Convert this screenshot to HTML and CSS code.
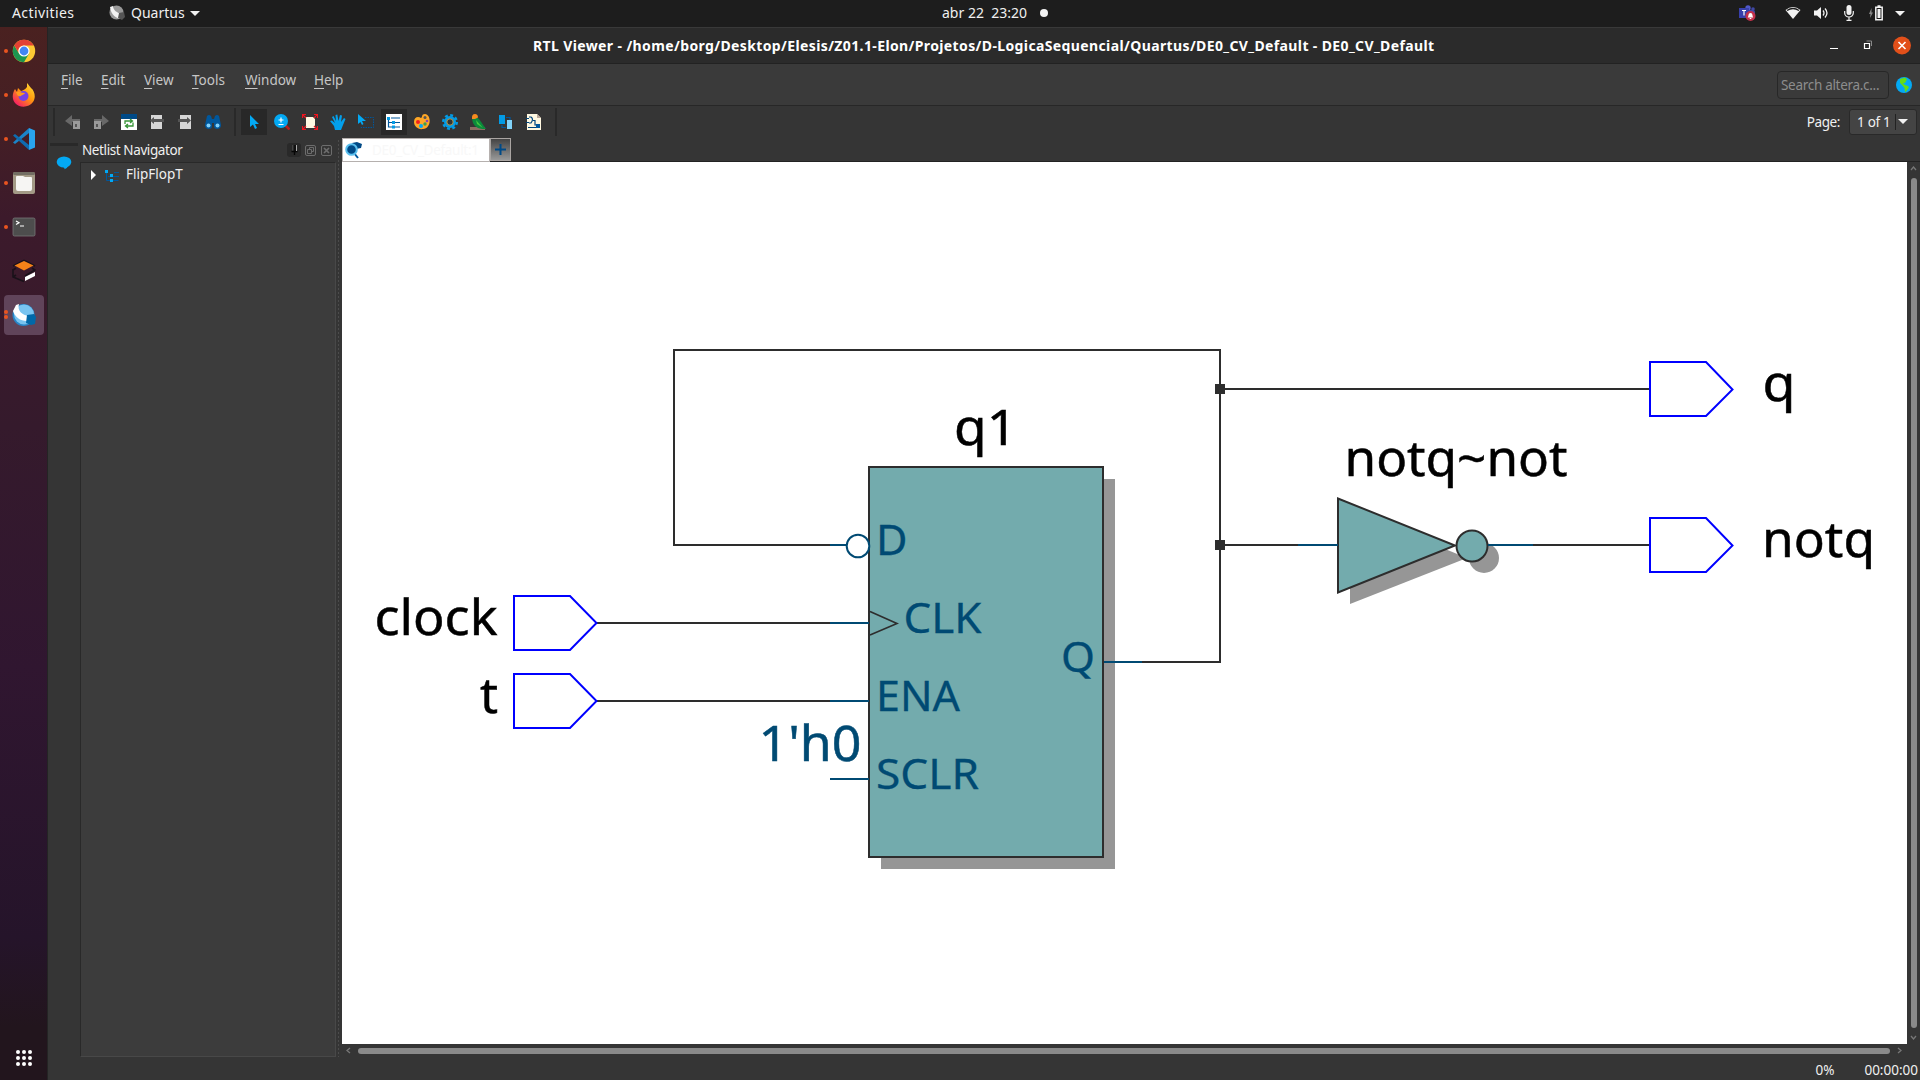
FILE: index.html
```html
<!DOCTYPE html>
<html lang="en">
<head>
<meta charset="utf-8">
<title>RTL Viewer</title>
<link rel="stylesheet" href="styles.css">
</head>
<body>
<header class="topbar">
  <span class="activities">Activities</span>
  <span class="appmenu">
    <svg width="17" height="17" viewBox="0 0 17 17"><circle cx="7.500" cy="7.500" r="7" fill="#999"/><path d="M1 2C2 10 7 14 14 14L13 9C8 8 4 5 4 1Z" fill="#f2f2f2"/><path d="M10 8l5-1 1 5-3 3-4-2z" fill="#555"/></svg>
    <span>Quartus</span><i class="caret"></i>
  </span>
  <span class="clock">abr 22&nbsp; 23:20<i class="notice"></i></span>
  <span class="tray">
    <svg width="18" height="16" viewBox="0 0 18 16"><circle cx="9" cy="3" r="2.700" fill="#5059c9"/><circle cx="14" cy="4" r="1.800" fill="#4048a5"/><rect y="5" x="7" width="9" height="7" rx="2" fill="#4048a5"/><rect y="3" width="10" height="10" fill="#3940ab"/><path d="M3 5.500h4M5 5.500v5" stroke="#fff" stroke-width="1.200"/><circle cx="11.500" cy="11" r="5" fill="#c4314b"/><path d="M8.700 12.500c1-1 .3-4.500 2.800-4.500s1.800 3.500 2.800 4.500zM10.700 13h1.600v1h-1.600z" fill="#fff"/></svg>
    <svg class="wifi" width="16" height="14" viewBox="0 0 16 14"><path d="M.5 4Q8-2 15.500 4L8 13z" fill="#f2f2f2"/><path d="M2 4.500Q8 .500 14 4.500" fill="none" stroke="#1d1d1d" stroke-width="1.300"/></svg>
    <svg class="vol" width="15" height="14" viewBox="0 0 15 14"><path d="M0 4.500h3L7 1v12L3 9.500H0z" fill="#f2f2f2"/><path d="M9 4.500q2 2.500 0 5M11 2.500q4 4.500 0 9" fill="none" stroke="#f2f2f2" stroke-width="1.300"/></svg>
    <svg class="mic" width="10" height="16" viewBox="0 0 10 16"><rect x="2.500" width="5" height="10" rx="2.500" fill="#f2f2f2"/><path d="M.7 6v2a4.300 4 0 0 0 8.600 0V6M5 12v3M2.500 15.300h5" fill="none" stroke="#f2f2f2" stroke-width="1.200"/></svg>
    <svg class="bat" width="15" height="16" viewBox="0 0 15 16"><path d="M2.500 3L0 9h1.500l-.5 4L4 7.500H2.500z" fill="#888"/><path d="M6.800 2.200h6.400v12.500H6.800zM8.500 1h3" fill="none" stroke="#f2f2f2" stroke-width="1.500"/><path d="M8.500 4h3v9h-3z" fill="#f2f2f2"/></svg>
    <i class="caret"></i>
  </span>
</header>
<div class="desktop">
  <nav class="dock">
    <div class="launcher run"><svg width="24" height="24" viewBox="0 0 24 24"><circle cx="12" cy="12" r="11.200" fill="#fcc934"/><path d="M2.300 6.400A11.200 11.200 0 0 0 12 23.200L16.900 14.800 12 12 7.200 14.800z" fill="#1c9650"/><path d="M2.300 6.400A11.200 11.200 0 0 1 21.700 6.400H12A5.600 5.600 0 0 0 6.500 13.500z" fill="#e34133"/><circle cx="12" cy="12" r="5.600" fill="#fff"/><circle cx="12" cy="12" r="4.400" fill="#4285f4"/></svg></div>
    <div class="launcher run"><svg width="24" height="24" viewBox="0 0 24 24"><defs><linearGradient id="ff" x1="1" y1="0" x2=".2" y2="1"><stop offset="0" stop-color="#ffe83c"/><stop offset=".5" stop-color="#ff980e"/><stop offset="1" stop-color="#f5156c"/></linearGradient></defs><path d="M15 0c2 2 3 4 4 5 4 3 5 10 2 14-4 6-14 6-18 1-3-4-3-9 0-14l2 3 1-4 3 3c2-1 4-1 6-4z" fill="url(#ff)"/><circle cx="11.500" cy="13" r="5" fill="#7542e5"/><path d="M4 9c4-1 5 1 9 1-1 2-4 2-4 3-3 1-4-1-5-4z" fill="#ff9a1f"/></svg></div>
    <div class="launcher run"><svg width="24" height="24" viewBox="0 0 24 24"><path d="M17 1v5L3 17 1 15.500z" fill="#1b84c9"/><path d="M1 8.500L3 7l14 11v5z" fill="#0f6cb0"/><path d="M17 1l6 2.500v17L17 23z" fill="#29a3ee"/></svg></div>
    <div class="launcher run"><svg width="24" height="24" viewBox="0 0 24 24"><rect x="1" y="1" width="22" height="22" rx="2" fill="#a39a86"/><rect x="1" y="1" width="22" height="3" rx="1.500" fill="#736e63"/><path d="M5 5h6l2 1h6q1 0 1 1v11q0 2-2 2H6q-2 0-2-2V6q0-1 1-1z" fill="#f6f5f3"/></svg></div>
    <div class="launcher run"><svg width="24" height="24" viewBox="0 0 24 24"><rect x="1" y="3" width="22" height="18" rx="1.500" fill="#4d4d4d" stroke="#777" stroke-width=".8"/><path d="M4 6l3 1.700L4 9.400M8 11h4" fill="none" stroke="#fff" stroke-width="1.200"/></svg></div>
    <div class="launcher"><svg width="24" height="24" viewBox="0 0 24 24"><path d="M1 7L12 1.500 23 7M1 10v8l11 4.500M1 11l3-2M20 9l3 2-10 6M1 18l3-2" fill="none" stroke="#191119" stroke-width="1.600"/><path d="M2.500 6.500L12 2l9.500 4.500L12 11.500z" fill="#f68218"/><path d="M13 18l10-5v4l-10 5z" fill="#fff"/></svg></div>
    <div class="launcher run two active"><svg width="24" height="24" viewBox="0 0 24 24"><circle cx="11.500" cy="12" r="11" fill="#2786c8"/><circle cx="12" cy="11.500" r="10" fill="#79c4f0"/><path d="M1 8L4 2l3-1C5 8 10 12 17 13l-2 5C8 18 3 14 1 8z" fill="#fff"/><path d="M15 12l7-1 2 3-1 7-4 1-5-2z" fill="#0068a8"/></svg></div>
    <svg class="showapps" width="18" height="18" viewBox="0 0 18 18" fill="#fff"><circle cx="3" cy="3" r="2"/><circle cx="9" cy="3" r="2"/><circle cx="15" cy="3" r="2"/><circle cx="3" cy="9" r="2"/><circle cx="9" cy="9" r="2"/><circle cx="15" cy="9" r="2"/><circle cx="3" cy="15" r="2"/><circle cx="9" cy="15" r="2"/><circle cx="15" cy="15" r="2"/></svg>
  </nav>
  <main class="window">
    <div class="titlebar">
      <span class="title">RTL Viewer - /home/borg/Desktop/Elesis/Z01.1-Elon/Projetos/D-LogicaSequencial/Quartus/DE0_CV_Default - DE0_CV_Default</span>
      <svg class="controls" width="84" height="20" viewBox="0 0 84 20"><path d="M3 12.500h8" stroke="#fff"/><path d="M37.500 7.500h5v5h-5z" fill="none" stroke="#fff" stroke-width="1.200"/><path d="M39.500 5h5v5" fill="none" stroke="#888"/><circle cx="75" cy="9.500" r="9" fill="#e2501a"/><path d="M71.500 6l7 7M78.500 6l-7 7" stroke="#fff" stroke-width="1.600"/></svg>
    </div>
    <div class="menubar">
      <span class="m-file"><u>F</u>ile</span><span class="m-edit"><u>E</u>dit</span><span class="m-view"><u>V</u>iew</span><span class="m-tools"><u>T</u>ools</span><span class="m-window"><u>W</u>indow</span><span class="m-help"><u>H</u>elp</span>
      <div class="search">Search altera.c...</div>
      <svg class="globe" width="16" height="16" viewBox="0 0 16 16"><circle cx="8" cy="8" r="8" fill="#03a9f4"/><path d="M4 2l5-1.500 2 2-2 3.500-2 0 2 2 3 1 1 1.500-3 4-1 .5-.5-4-3-3.500L4 6z" fill="#64dd17"/></svg>
    </div>
    <div class="toolbar">
      <i class="sep"></i>
      <div class="tools first">
        <span><svg width="16" height="16" viewBox="0 0 16 16"><path d="M0 7l7-6v4h8v3H7v4z" fill="#686868"/><path d="M8 7h7v8H8z" fill="#9a9a9a"/><path d="M10 10h2v3h-2z" fill="#555"/></svg></span>
        <span><svg width="16" height="16" viewBox="0 0 16 16"><path d="M16 7L9 1v4H1v3h8v4z" fill="#686868"/><path d="M1 7h7v8H1z" fill="#9a9a9a"/><path d="M3 10h2v3H3z" fill="#555"/></svg></span>
        <span><svg width="16" height="16" viewBox="0 0 16 16"><path d="M0 0h16v16H0z" fill="#fff"/><path d="M0 0h16v5H0z" fill="#004a87"/><path d="M4 10V7h7M9 5l2.500 2L9 9M12 8.500V12H5M7 10l-2.500 2L7 14" fill="none" stroke="#389438" stroke-width="1.300"/></svg></span>
        <span><svg width="16" height="16" viewBox="0 0 16 16"><path d="M2 1h11v14H2z" fill="#d6d6d6"/><path d="M1 6.500L5 3v2h10v3H5v2z" fill="#555"/></svg></span>
        <span><svg width="16" height="16" viewBox="0 0 16 16"><path d="M3 1h11v14H3z" fill="#d6d6d6"/><path d="M14 6.500L10 3v2H1v3h9v2z" fill="#555"/></svg></span>
        <span><svg width="16" height="16" viewBox="0 0 16 16"><path d="M2 2q2-2 4 0l1 3h2l1-3q2-2 4 0l2 9q0 4-4 4-3 0-3-3V9H7v3q0 3-3 3-4 0-4-4z" fill="#00579c"/><circle cx="3.500" cy="11.500" r="2" fill="#80d0fa"/><circle cx="12.500" cy="11.500" r="2" fill="#80d0fa"/></svg></span>
      </div>
      <i class="sep"></i>
      <div class="tools main">
        <span class="on"><svg width="16" height="16" viewBox="0 0 16 16"><path d="M4 1v12l3-2.500L9 15l2-1-2-4h4z" fill="#03a9f4"/></svg></span>
        <span><svg width="16" height="16" viewBox="0 0 16 16"><path d="M10.500 10.500l5 5" stroke="#b71c1c" stroke-width="2.500"/><circle cx="7" cy="7" r="7" fill="#03a9f4"/><path d="M4.500 6h5M7 3.500v5M4.500 10.500h5" stroke="#fff" stroke-width="1.200"/></svg></span>
        <span><svg width="16" height="16" viewBox="0 0 16 16"><path d="M4 3h7l2 2v9H4z" fill="#fff8e1"/><path d="M.5 4V.5H4M12 .5h3.500V4M15.500 12v3.500H12M4 15.500H.5V12M0 0l4 4M16 0l-4 4M16 16l-4-4M0 16l4-4" fill="none" stroke="#f0141e" stroke-width="1.200"/></svg></span>
        <span><svg width="16" height="16" viewBox="0 0 16 16"><path d="M5 16L4 12 0 7l2-.5L5 9 2 3l1.500-1L6 7 5.500 1 7.300.500 8.500 7 10 1l2 .5L11 8l3-4 1.500 1L13 11l-2 5z" fill="#03a0ec"/></svg></span>
        <span><svg width="16" height="16" viewBox="0 0 16 16"><path d="M0 0v10l2.500-2L4 11l1.500-1L4 7h4z" fill="#03a9f4"/><path d="M7 3.500h8.500v10H3V12" fill="none" stroke="#00579c" stroke-dasharray="1.500 1"/></svg></span>
        <span class="on"><svg width="16" height="16" viewBox="0 0 16 16"><path d="M0 0h16v16H0z" fill="#fff"/><path d="M2.500 4v9H7M3 8.500h4M5 4h9M9 8.500h5M9 13h5" fill="none" stroke="#00579c" stroke-width="1.200"/><path d="M1 3h3v3H1zM6 7h3v3H6zM6 11.500h3v3H6z" fill="#039be5"/></svg></span>
        <span><svg width="16" height="16" viewBox="0 0 16 16"><path d="M0 8C0 3 4 2 7 4c2-1 0-4 4-4 7 1 6 15-2 15-5 1-9-3-9-7z" fill="#ffa726"/><circle cx="11" cy="3.500" r="1.500" fill="#555"/><circle cx="4" cy="8" r="2" fill="#f02020"/><circle cx="7" cy="12" r="2" fill="#03a9f4"/><circle cx="11" cy="10" r="1.700" fill="#43a047"/><circle cx="13" cy="7" r="1.300" fill="#8e44ad"/></svg></span>
        <span><svg width="16" height="16" viewBox="0 0 16 16"><circle cx="8" cy="8" r="6" fill="#039be5"/><circle cx="8" cy="8" r="6.800" fill="none" stroke="#039be5" stroke-width="2.400" stroke-dasharray="2.900 2.440"/><circle cx="8" cy="8" r="3.200" fill="#333" stroke="#b89b4a"/></svg></span>
        <span><svg width="16" height="16" viewBox="0 0 16 16"><path d="M0 13h15v3H0z" fill="#8d6e63"/><path d="M2 5l4-2 3 2 7 10h-4Q3 14 2 5z" fill="#0b8a3c"/><path d="M6 6l7 8-6-4z" fill="#43c93e"/><path d="M2 5q-.5-5 3-5Q8 0 8 3.500L5 5z" fill="#f58b1f"/></svg></span>
        <span><svg width="16" height="16" viewBox="0 0 16 16"><path d="M1 1h6v9H1z" fill="#039be5"/><path d="M9 6h5v9H9z" fill="#81d4fa"/><path d="M8 3.500h4V6M4 11v2.500h4" fill="none" stroke="#00579c" stroke-width="1.200"/></svg></span>
        <span><svg width="16" height="16" viewBox="0 0 16 16"><path d="M1 0h10l4 4v12H1z" fill="#fff8e1"/><path d="M11 0v4h4" fill="#bca99b"/><path d="M0 4.500h3M0 8.500h3M3 3h2q3 2 0 6H3M7 6.500h2V11h3M2 13.500h8" fill="none" stroke="#00447c" stroke-width="1.200"/><path d="M10 10h4v4h-4z" fill="#00579c"/></svg></span>
      </div>
      <i class="sep"></i>
      <span class="pagelabel">Page:</span>
      <div class="combo"><span>1 of 1</span><b><i class="caret"></i></b></div>
    </div>
    <div class="body">
      <div class="rail"><i></i><svg width="16" height="14" viewBox="0 0 16 14"><ellipse cx="8" cy="6" rx="7.300" ry="5.500" fill="#03a9f4"/><path d="M6 10h6q-1 3-3.500 3.300Q9 12 6 10z" fill="#03a9f4"/></svg></div>
      <section class="navigator">
        <div class="navhead"><span>Netlist Navigator</span>
          <svg width="46" height="14" viewBox="0 0 46 14"><rect width="14" height="14" rx="3" fill="#292929"/><path d="M5.500 2v6" stroke="#444"/><path d="M8 2v6M4.500 8.500h6M7.500 8v4" stroke="#050505" stroke-width="1.400"/><path d="M9.500 2v6" stroke="#aaa"/><g fill="none" stroke="#6d6d6d"><rect x="18.500" y="2.500" width="10" height="10" rx="1.500"/><path d="M20.500 6.500h4v4h-4zM22.500 6V4.500h4v4H25"/><rect x="34.500" y="2.500" width="10" height="10" rx="1.500"/><path d="M37 5l5 5M42 5l-5 5" stroke-width="1.700"/></g></svg>
        </div>
        <div class="tree"><i class="expander"></i><svg width="15" height="12" viewBox="0 0 15 12"><path d="M1.500 2v8.500h12M3 6.500h11M9 2.500h5" fill="none" stroke="#00579c"/><path d="M0 0h3v3H0zM5 4h3v3H5zM5 9h3v3H5z" fill="#03a9f4"/></svg><span>FlipFlopT</span></div>
      </section>
      <div class="splitter"></div>
      <section class="work">
        <div class="tabs">
          <div class="tab"><svg width="17" height="17" viewBox="0 0 17 17"><path d="M7 1l5-1 5 2-1 4-5 1z" fill="#004a87"/><path d="M9 11l4 5" stroke="#00579c" stroke-width="2"/><circle cx="6.500" cy="7.500" r="5.300" fill="#004a87" stroke="#59bfee" stroke-width="2"/></svg><span>DE0_CV_Default:1</span></div>
          <div class="plus"><svg width="11" height="11" viewBox="0 0 11 11"><path d="M5.500 0v11M0 5.500h11" stroke="#004a87" stroke-width="2"/></svg></div>
        </div>
        <div class="view">
          <svg class="schematic" width="1565" height="882" viewBox="342 162 1565 882">
            <g class="shadow"><path d="M881 479h234v390H881z"/><path d="M1350 510v94l117-46z"/><circle cx="1484" cy="558" r="15"/></g>
            <g class="wire"><path d="M831 545H674V350H1220V662H1142M596 623H831M596 701H831M1220 389H1650M1220 545H1299M1533 545H1650"/></g>
            <path class="box" d="M869 467h234v390H869z"/>
            <path class="box" d="M1338 498.500v94L1455 545.500z"/>
            <circle class="box" cx="1472" cy="546" r="15.500"/>
            <path class="thin" d="M870 611.500l27 12-27 11.500"/>
            <path class="pin" d="M830 545h17M830 623h39M830 701h39M830 779h39M1104 662h38M1298 545h40M1488 545h45"/>
            <circle class="bubble" cx="858" cy="546" r="11.300"/>
            <path class="node" d="M1215 384h10v10h-10zM1215 540h10v10h-10z"/>
            <path class="port" d="M514 596h56l26.500 27-26.500 27h-56zM514 674h56l26.500 27-26.500 27h-56zM1650 362h56l26.500 27.500-26.500 26.500h-56zM1650 518h56l26.500 27.500-26.500 26.500h-56z"/>
            <g class="name">
              <text x="374.500" y="635" textLength="123" lengthAdjust="spacingAndGlyphs">clock</text>
              <text x="480" y="713">t</text>
              <text x="954" y="445" textLength="63" lengthAdjust="spacingAndGlyphs">q1</text>
              <text x="1344.500" y="476" textLength="223" lengthAdjust="spacingAndGlyphs">notq~not</text>
              <text x="1762.500" y="401" textLength="33" lengthAdjust="spacingAndGlyphs">q</text>
              <text x="1762" y="557" textLength="113" lengthAdjust="spacingAndGlyphs">notq</text>
            </g>
            <text class="name blue" x="758.500" y="761" textLength="103" lengthAdjust="spacingAndGlyphs">1'h0</text>
            <g class="pinname">
              <text x="876" y="555" textLength="31.500" lengthAdjust="spacingAndGlyphs">D</text>
              <text x="903.500" y="633" textLength="78" lengthAdjust="spacingAndGlyphs">CLK</text>
              <text x="876" y="711" textLength="84" lengthAdjust="spacingAndGlyphs">ENA</text>
              <text x="876" y="789" textLength="103" lengthAdjust="spacingAndGlyphs">SCLR</text>
              <text x="1061" y="672" textLength="34" lengthAdjust="spacingAndGlyphs">Q</text>
            </g>
          </svg>
          <div class="vscroll"><svg width="7" height="5" viewBox="0 0 7 5"><path d="M1 4l2.500-3L6 4" fill="none" stroke="#777" stroke-width="1.300"/></svg><i></i><svg width="7" height="5" viewBox="0 0 7 5"><path d="M1 1l2.500 3L6 1" fill="none" stroke="#777" stroke-width="1.300"/></svg></div>
        </div>
        <div class="hscroll"><svg width="5" height="7" viewBox="0 0 5 7"><path d="M4 1L1 3.500 4 6" fill="none" stroke="#777" stroke-width="1.300"/></svg><i></i><svg width="5" height="7" viewBox="0 0 5 7"><path d="M1 1l3 2.500L1 6" fill="none" stroke="#777" stroke-width="1.300"/></svg></div>
      </section>
    </div>
    <footer class="status"><span>0%</span><span>00:00:00</span></footer>
  </main>
</div>
</body>
</html>
```
FILE: styles.css
```css
* { box-sizing: border-box; }
body { margin: 0; width: 1920px; height: 1080px; overflow: hidden; background: #353535; color: #f0f0f0; font: 13.5px/18px "Noto Sans", sans-serif; display: flex; flex-direction: column; }
svg { display: block; flex: none; }
.caret { display: block; width: 0; height: 0; border: 5px solid transparent; border-top-color: #f2f2f2; border-bottom: 0; }

.topbar { height: 27px; flex: none; background: #1d1d1d; display: grid; grid-template-columns: 109px 831px 1fr auto; align-items: center; font-size: 14px; white-space: nowrap; }
.activities { padding-left: 12px; letter-spacing: .4px; margin-top: -1px; }
.appmenu { display: flex; align-items: center; margin-top: -1px; }
.appmenu span { margin: 0 5px 0 5px; }
.clock { display: flex; align-items: center; margin: -1px 0 0 2px; }
.notice { width: 8px; height: 8px; border-radius: 50%; background: #f2f2f2; margin-left: 13px; }
.tray { display: flex; align-items: center; padding-right: 15px; margin-top: -1px; }
.tray > svg:first-child { margin-right: -1px; }
.wifi { margin-left: 29px; }
.vol { margin-left: 13px; }
.mic { margin-left: 15px; }
.bat { margin-left: 15px; }
.tray .caret { margin-left: 11px; }

.desktop { flex: 1; display: flex; min-height: 0; }
.dock { width: 48px; flex: none; padding: 4px 4px 13px; border-right: 1px solid #242424; display: flex; flex-direction: column; gap: 4px; background: linear-gradient(#4a2120 0, #451f24 90px, #3c1a2b 190px, #351a2c 400px, #301630 640px, #25142a 910px, #22151d 1000px); }
.launcher { width: 40px; height: 40px; border-radius: 4px; display: grid; place-items: center; position: relative; flex: none; }
.active { background: #60445a; }
.run::before { content: ""; position: absolute; left: 0; top: 18px; width: 4px; height: 4px; border-radius: 50%; background: #e95420; }
.two::before { top: 15px; box-shadow: 0 5px #e95420; }
.showapps { margin: auto 0 0 11px; }

.window { flex: 1; display: flex; flex-direction: column; min-width: 0; }
.titlebar { height: 37px; flex: none; background: #2b2b2b; border-top: 1px solid #393939; border-bottom: 1px solid #222; display: flex; align-items: center; justify-content: flex-end; padding: 0 9px 0 485px; }
.title { margin-right: auto; font-weight: 700; font-size: 14px; letter-spacing: .38px; color: #fff; white-space: nowrap; }
.menubar { height: 42px; flex: none; background: #3a3a3a; border-bottom: 1px solid #272727; display: flex; align-items: center; padding: 0 8px 0 13px; color: #c6c6c6; }
.menubar > span { margin-top: -10px; white-space: nowrap; }
.menubar u { text-underline-offset: 3px; }
.m-file { width: 40px; } .m-edit { width: 43px; } .m-view { width: 48px; } .m-tools { width: 53px; } .m-window { width: 69px; } .m-help { width: 40px; }
.search { margin-left: auto; width: 112px; height: 28px; border: 1px solid #272727; border-radius: 4px; padding: 4px 3px; color: #8d8d8d; white-space: nowrap; letter-spacing: -.3px; }
.globe { margin-left: 7px; }
.toolbar { height: 32px; flex: none; display: flex; align-items: center; padding: 0 3px 0 5px; }
.sep { width: 2px; height: 28px; background: #292929; }
.tools { display: flex; }
.tools span { width: 28px; height: 28px; display: grid; place-items: center; flex: none; }
.tools .on { background: linear-gradient(#282828, #282828) center / 26px 26px no-repeat; }
.first { width: 179px; padding-left: 4px; }
.main { margin-left: 4px; width: 315px; }
.pagelabel { margin-left: auto; margin-right: 9px; letter-spacing: -.4px; }
.combo { width: 68px; height: 26px; border: 1px solid #292929; border-radius: 3px; background: #444; display: flex; align-items: center; padding-left: 7px; white-space: nowrap; }
.combo span { letter-spacing: -.3px; }
.combo b { margin-left: auto; height: 16px; border-left: 1px solid #222; padding: 5px 8px 0 2px; }

.body { flex: 1; min-height: 0; display: grid; grid-template-columns: 32px 256px 6px 1fr; }
.rail i { display: block; width: 28px; height: 3px; background: #292929; margin: 5px 0 10px 2px; }
.rail svg { margin-left: 8px; }
.navigator { display: flex; flex-direction: column; min-height: 0; }
.navhead { height: 24px; display: flex; justify-content: space-between; align-items: center; padding: 0 3px 0 2px; letter-spacing: -.4px; }
.tree { flex: 1; border: 1px solid #292929; border-right-color: #484848; border-bottom-color: #484848; background: #3c3c3c; display: flex; align-items: flex-start; padding: 2px 0 0 10px; }
.tree svg { margin: 5px 6px 0 9px; }
.expander { border: 5px solid transparent; border-left-color: #fff; border-right: 0; margin-top: 5px; }
.splitter { background: radial-gradient(circle, #4c4c4c 0.8px, transparent 1px) 0 0 / 3px 4px; margin: 1px 1px 0; }
.work { display: flex; flex-direction: column; min-width: 0; }
.tabs { height: 24px; flex: none; display: flex; border-bottom: 1px solid #222; }
.tab { width: 148px; height: 24px; background: #fff; border: 1px solid #b5b0ae; display: flex; align-items: center; gap: 10px; padding: 0 2px; color: #f8f8f8; white-space: nowrap; letter-spacing: -.3px; }
.plus { width: 21px; height: 23px; border: 1px solid #aaa5a2; background: linear-gradient(#444, #999); display: grid; place-items: center; }
.view { height: 882px; flex: none; display: flex; }
.schematic { background: #fff; }
.vscroll { width: 13px; display: flex; flex-direction: column; align-items: center; padding: 4px 0 4px; gap: 7px; }
.vscroll i { flex: 1; width: 6px; border-radius: 3px; background: #8a8a8a; }
.hscroll { height: 13px; display: flex; align-items: center; gap: 7px; padding: 0 18px 0 4px; }
.hscroll i { flex: 1; height: 6px; border-radius: 3px; background: #8a8a8a; }
.status { height: 23px; flex: none; display: flex; justify-content: flex-end; gap: 30px; padding: 4px 2px 0 0; }

.shadow { fill: #969696; }
.wire { fill: none; stroke: #2d2d2d; stroke-width: 2; }
.box { fill: #73abad; stroke: #2d2d2d; stroke-width: 2; }
.thin { fill: none; stroke: #2d2d2d; stroke-width: 1.6; }
.pin { fill: none; stroke: #004a73; stroke-width: 2; }
.bubble { fill: #fff; stroke: #004a73; stroke-width: 2; }
.node { fill: #2d2d2d; }
.port { fill: #fff; stroke: #00f; stroke-width: 2; }
.name { font-size: 50px; fill: #000; stroke: #000; stroke-width: .5; }
.blue { fill: #004a73; stroke: #004a73; }
.pinname { font-size: 42px; fill: #004a73; stroke: #004a73; stroke-width: .3; }
```
